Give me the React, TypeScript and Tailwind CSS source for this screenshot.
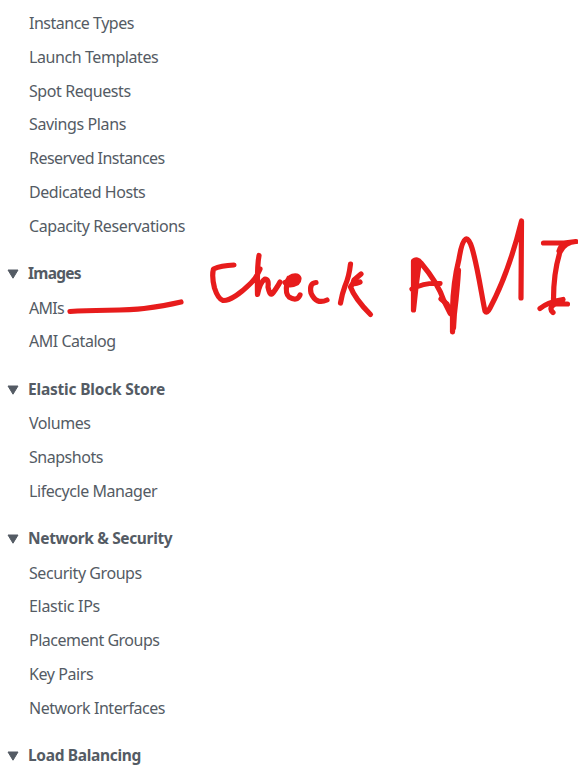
type Item = { label: string; fit: string };
type Section = { title?: Item; items: Item[] };

const sections: Section[] = [
  {
    items: [
      { label: 'Instance Types', fit: 'tracking-[-0.49px]' },
      { label: 'Launch Templates', fit: 'tracking-[-0.42px]' },
      { label: 'Spot Requests', fit: 'tracking-[-0.41px]' },
      { label: 'Savings Plans', fit: 'tracking-[-0.38px]' },
      { label: 'Reserved Instances', fit: 'tracking-[-0.54px]' },
      { label: 'Dedicated Hosts', fit: 'tracking-[-0.43px]' },
      { label: 'Capacity Reservations', fit: 'tracking-[-0.39px]' },
    ],
  },
  {
    title: { label: 'Images', fit: 'tracking-[-0.75px]' },
    items: [
      { label: 'AMIs', fit: 'tracking-[-0.7px]' },
      { label: 'AMI Catalog', fit: 'tracking-[-0.47px]' },
    ],
  },
  {
    title: { label: 'Elastic Block Store', fit: 'tracking-[-0.2px]' },
    items: [
      { label: 'Volumes', fit: 'tracking-[-0.46px]' },
      { label: 'Snapshots', fit: 'tracking-[-0.47px]' },
      { label: 'Lifecycle Manager', fit: 'tracking-[-0.44px]' },
    ],
  },
  {
    title: { label: 'Network & Security', fit: 'tracking-[-0.36px]' },
    items: [
      { label: 'Security Groups', fit: 'tracking-[-0.43px]' },
      { label: 'Elastic IPs', fit: 'tracking-[-0.3px]' },
      { label: 'Placement Groups', fit: 'tracking-[-0.49px]' },
      { label: 'Key Pairs', fit: 'tracking-[-0.41px]' },
      { label: 'Network Interfaces', fit: 'tracking-[-0.45px]' },
    ],
  },
  { title: { label: 'Load Balancing', fit: 'tracking-[-0.33px]' }, items: [] },
];

function NavSection({ title, items }: Section) {
  return (
    <section>
      {title && (
        <h2 className="mt-[13.2px] mb-px flex h-[33.8px] items-center pt-[2px] pl-[7px] text-[15.5px] font-bold">
          <svg className="mt-px mr-[9px] h-[10px] w-3 shrink-0" viewBox="0 0 12 10" aria-hidden="true">
            <path d="M1 1h10L6 9.200Z" fill="#545b64" stroke="#545b64" strokeLinejoin="round" />
          </svg>
          <span className={title.fit}>{title.label}</span>
        </h2>
      )}
      <ul>
        {items.map((item) => (
          <li key={item.label} className="flex h-[33.8px] items-center pl-[29px] text-base">
            <a className={item.fit}>{item.label}</a>
          </li>
        ))}
      </ul>
    </section>
  );
}

// Handwritten note drawn over the navigation
function Annotation() {
  return (
    <svg
      className="pointer-events-none absolute top-0 left-0 h-[775px] w-[578px]"
      viewBox="0 0 578 775"
      fill="none"
      stroke="#e71c1c"
      strokeWidth="5.2"
      strokeLinecap="round"
      strokeLinejoin="round"
    >
      <path d="M70 311.5C100 309.500 124 311 144 308.500Q164 306 181 302" />
      <path d="M234 265Q221 265.500 213.500 269Q211.500 276 214.500 288Q218 299 223 300.500C230 301 242 292 251 283Q257 277 260 269M259 255.500Q257 266 257.500 294.500Q260 282 265 279Q269 279 268 287Q270 297 273 293Q278 286 280 282" />
      <path d="M285 282.500Q289 287 297 283Q301 278 297 276Q290 275 287 282Q285 294 289 297Q297 302 300 295M291 280L298 280M289 278L297 277" />
      <path d="M316 282.500Q309 283 311 293Q316 305 327 300" />
      <path d="M350.500 264Q349 277 345 286Q342 294 340.500 303M361 274L354 280Q351 286 360 282M355 280L350.500 287Q355 299 370.500 314.500" />
      <path d="M413.500 310V261Q417 258 421 263Q438 283 444 301L450 313M417 262L418.500 268L416 287L413.500 310M412 289Q426 282 440 283.500" />
      <path d="M441 299L447 304L451 314M458.500 270C457 297 454 314 452.500 332L452.500 310Q453 283 459 259C463 234 468 235 472 248C478 268 482 298 485 311Q487 314 490 308Q509 272 521.500 221L521 298M457 272L453.500 328" />
      <path d="M543.500 243H564L576 241.500Q565 242 560 252Q553 274 553.500 304M565 244Q561 245 559 251M563 299.500Q548 302 540 308.500M567.500 304H555Q548 308 553 312.500" />
    </svg>
  );
}

export default function App() {
  return (
    <main className="relative h-[775px] w-[578px] overflow-hidden bg-white pt-[6.1px] font-['Noto_Sans',sans-serif] whitespace-nowrap text-[#545b64]">
      <nav>
        {sections.map((section, i) => (
          <NavSection key={i} {...section} />
        ))}
      </nav>
      <Annotation />
    </main>
  );
}
